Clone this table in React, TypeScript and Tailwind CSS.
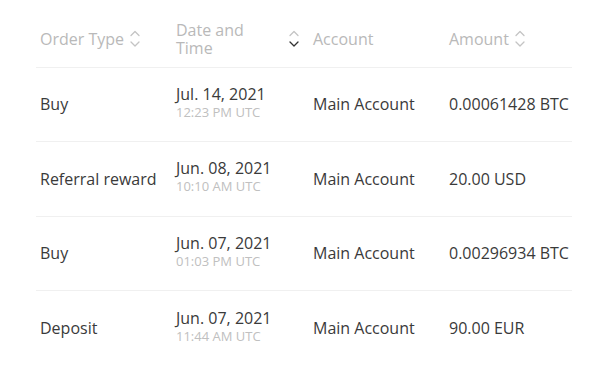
import { ReactNode } from 'react';

type Row = { type: string; date: string; time: string; account: string; amount: string };

const rows: Row[] = [
  { type: 'Buy', date: 'Jul. 14, 2021', time: '12:23 PM UTC', account: 'Main Account', amount: '0.00061428 BTC' },
  { type: 'Referral reward', date: 'Jun. 08, 2021', time: '10:10 AM UTC', account: 'Main Account', amount: '20.00 USD' },
  { type: 'Buy', date: 'Jun. 07, 2021', time: '01:03 PM UTC', account: 'Main Account', amount: '0.00296934 BTC' },
  { type: 'Deposit', date: 'Jun. 07, 2021', time: '11:44 AM UTC', account: 'Main Account', amount: '90.00 EUR' },
];

function SortIcon({ active }: { active?: boolean }) {
  return (
    <svg width="12" height="20" viewBox="0 0 12 20" fill="none" strokeWidth="1.3" strokeLinecap="round" strokeLinejoin="round">
      <path d="M2 6.5 L6 2.5 L10 6.5" stroke="#c4c4c4" />
      <path d="M2 13 L6 17 L10 13" stroke={active ? '#333333' : '#c4c4c4'} />
    </svg>
  );
}

function Th({ children, className = '' }: { children: ReactNode; className?: string }) {
  return <th className={`text-left font-normal align-middle pl-1 pt-[12px] ${className}`}>{children}</th>;
}

export default function App() {
  return (
    <div className="w-[600px] h-[366px] bg-white overflow-hidden font-['Open_Sans',sans-serif]">
      <table className="ml-[36px] w-[536px] border-collapse table-fixed">
        <colgroup>
          <col className="w-[136px]" />
          <col className="w-[137px]" />
          <col className="w-[136px]" />
          <col />
        </colgroup>
        <thead>
          <tr className="h-[67px] border-b border-[#f0f0f0] text-[16px] text-[#b9b9b9]">
            <Th>
              <div className="flex items-center gap-[5px]">
                <span>Order Type</span>
                <SortIcon />
              </div>
            </Th>
            <Th className="pr-[9px]">
              <div className="flex items-center justify-between">
                <span className="leading-[18px]">
                  Date and
                  <br />
                  Time
                </span>
                <SortIcon active />
              </div>
            </Th>
            <Th>
              <div>Account</div>
            </Th>
            <Th>
              <div className="flex items-center gap-[5px]">
                <span>Amount</span>
                <SortIcon />
              </div>
            </Th>
          </tr>
        </thead>
        <tbody className="text-[16px] text-[#3a3a3a]">
          {rows.map((r, i) => (
            <tr key={i} className={`h-[74.5px] ${i < rows.length - 1 ? 'border-b border-[#f0f0f0]' : ''}`}>
              <td className="pl-1 align-middle whitespace-nowrap">{r.type}</td>
              <td className="pl-1 pb-[4px] align-middle">
                <div className="leading-[19px]">{r.date}</div>
                <div className="text-[13px] leading-[16px] text-[#c0c0c0]">{r.time}</div>
              </td>
              <td className="pl-1 align-middle whitespace-nowrap">{r.account}</td>
              <td className="pl-1 align-middle whitespace-nowrap">{r.amount}</td>
            </tr>
          ))}
        </tbody>
      </table>
    </div>
  );
}
